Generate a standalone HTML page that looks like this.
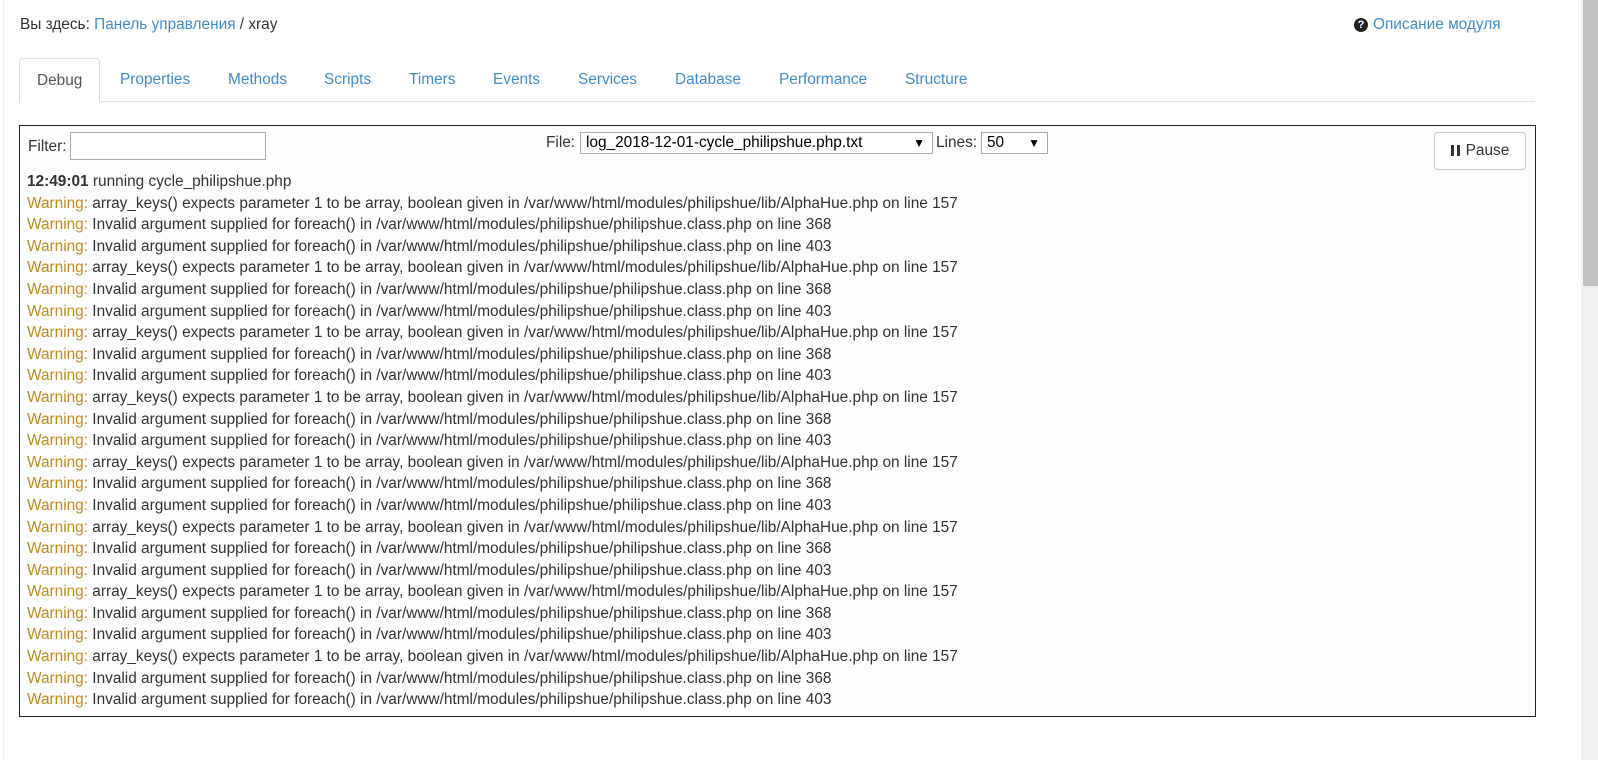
<!DOCTYPE html>
<html><head><meta charset="utf-8"><style>
*{box-sizing:border-box}
body{margin:0;width:1598px;height:760px;overflow:hidden;background:#fff;font-family:"Liberation Sans",Arial,sans-serif;color:#333;position:relative}
a{color:#428bca;text-decoration:none}
.lline{position:absolute;left:3px;top:0;width:1px;height:760px;background:#eee}
.sb{position:absolute;left:1581px;top:0;width:17px;height:760px;background:#f0f0f0}
.th{position:absolute;left:1583px;top:0;width:15px;height:286px;background:#c1c1c1}
.bc{position:absolute;left:20px;top:16px;font-size:15.4px}
.help{position:absolute;left:1354px;top:16px;font-size:15.4px}
.help i{display:inline-block;width:14px;height:14px;border-radius:50%;background:#222;color:#fff;font-size:11px;font-style:normal;font-weight:bold;text-align:center;line-height:14px;vertical-align:1px;margin-right:5px}
.tabs{position:absolute;left:19px;top:58px;width:1516px;height:44px;border-bottom:1px solid #ddd}
.tab{position:absolute;top:0;height:44px;line-height:43px;font-size:15.4px;color:#428bca}
.tab.act{color:#555;border:1px solid #ddd;border-bottom:1px solid #fff;border-radius:4px 4px 0 0;background:#fff;height:45px;padding:0 17px;left:0}
.box{position:absolute;left:19px;top:125px;width:1517px;height:592px;border:1px solid #222;background:#fdfdfd}
.f{position:absolute;font-size:15.4px}
.inp{position:absolute;left:50px;top:6px;width:196px;height:28px;border:1px solid #aaa;background:#fff}
.sel{position:absolute;height:22px;border:1px solid #aaa;background:#fff;font-size:15.4px;line-height:20px;padding-left:5px;color:#000}
.sel b{position:absolute;right:7px;top:0;font-size:12px;font-weight:normal}
.btn{position:absolute;left:1414px;top:6px;width:92px;height:38px;border:1px solid #ccc;border-radius:4px;background:#fff;font-size:15.4px;line-height:36px;text-align:center;color:#333}
.btn i{display:inline-block;height:11px;border-left:3px solid #333;border-right:3px solid #333;width:9px;margin-right:6px;vertical-align:-1px}
.log{position:absolute;left:7px;top:45px;font-size:15.4px;line-height:21.6px;white-space:nowrap}
.w{color:#c08a1e}
</style></head><body>
<div class="lline"></div>
<div class="sb"></div><div class="th"></div>
<div class="bc">Вы здесь: <a>Панель управления</a> / xray</div>
<div class="help"><i>?</i><a>Описание модуля</a></div>
<div class="tabs">
<div class="tab act">Debug</div>
<div class="tab" style="left:101px">Properties</div>
<div class="tab" style="left:209px">Methods</div>
<div class="tab" style="left:305px">Scripts</div>
<div class="tab" style="left:390px">Timers</div>
<div class="tab" style="left:474px">Events</div>
<div class="tab" style="left:559px">Services</div>
<div class="tab" style="left:656px">Database</div>
<div class="tab" style="left:760px">Performance</div>
<div class="tab" style="left:886px">Structure</div>
</div>
<div class="box">
<div class="f" style="left:8px;top:12px">Filter:</div>
<div class="inp"></div>
<div class="f" style="left:526px;top:8px">File:</div>
<div class="sel" style="left:560px;top:6px;width:353px">log_2018-12-01-cycle_philipshue.php.txt<b>▼</b></div>
<div class="f" style="left:916px;top:8px">Lines:</div>
<div class="sel" style="left:961px;top:6px;width:67px">50<b>▼</b></div>
<div class="btn"><i></i>Pause</div>
<div class="log">
<b>12:49:01</b> running cycle_philipshue.php<br>
<span class="w">Warning:</span> array_keys() expects parameter 1 to be array, boolean given in /var/www/html/modules/philipshue/lib/AlphaHue.php on line 157<br>
<span class="w">Warning:</span> Invalid argument supplied for foreach() in /var/www/html/modules/philipshue/philipshue.class.php on line 368<br>
<span class="w">Warning:</span> Invalid argument supplied for foreach() in /var/www/html/modules/philipshue/philipshue.class.php on line 403<br>
<span class="w">Warning:</span> array_keys() expects parameter 1 to be array, boolean given in /var/www/html/modules/philipshue/lib/AlphaHue.php on line 157<br>
<span class="w">Warning:</span> Invalid argument supplied for foreach() in /var/www/html/modules/philipshue/philipshue.class.php on line 368<br>
<span class="w">Warning:</span> Invalid argument supplied for foreach() in /var/www/html/modules/philipshue/philipshue.class.php on line 403<br>
<span class="w">Warning:</span> array_keys() expects parameter 1 to be array, boolean given in /var/www/html/modules/philipshue/lib/AlphaHue.php on line 157<br>
<span class="w">Warning:</span> Invalid argument supplied for foreach() in /var/www/html/modules/philipshue/philipshue.class.php on line 368<br>
<span class="w">Warning:</span> Invalid argument supplied for foreach() in /var/www/html/modules/philipshue/philipshue.class.php on line 403<br>
<span class="w">Warning:</span> array_keys() expects parameter 1 to be array, boolean given in /var/www/html/modules/philipshue/lib/AlphaHue.php on line 157<br>
<span class="w">Warning:</span> Invalid argument supplied for foreach() in /var/www/html/modules/philipshue/philipshue.class.php on line 368<br>
<span class="w">Warning:</span> Invalid argument supplied for foreach() in /var/www/html/modules/philipshue/philipshue.class.php on line 403<br>
<span class="w">Warning:</span> array_keys() expects parameter 1 to be array, boolean given in /var/www/html/modules/philipshue/lib/AlphaHue.php on line 157<br>
<span class="w">Warning:</span> Invalid argument supplied for foreach() in /var/www/html/modules/philipshue/philipshue.class.php on line 368<br>
<span class="w">Warning:</span> Invalid argument supplied for foreach() in /var/www/html/modules/philipshue/philipshue.class.php on line 403<br>
<span class="w">Warning:</span> array_keys() expects parameter 1 to be array, boolean given in /var/www/html/modules/philipshue/lib/AlphaHue.php on line 157<br>
<span class="w">Warning:</span> Invalid argument supplied for foreach() in /var/www/html/modules/philipshue/philipshue.class.php on line 368<br>
<span class="w">Warning:</span> Invalid argument supplied for foreach() in /var/www/html/modules/philipshue/philipshue.class.php on line 403<br>
<span class="w">Warning:</span> array_keys() expects parameter 1 to be array, boolean given in /var/www/html/modules/philipshue/lib/AlphaHue.php on line 157<br>
<span class="w">Warning:</span> Invalid argument supplied for foreach() in /var/www/html/modules/philipshue/philipshue.class.php on line 368<br>
<span class="w">Warning:</span> Invalid argument supplied for foreach() in /var/www/html/modules/philipshue/philipshue.class.php on line 403<br>
<span class="w">Warning:</span> array_keys() expects parameter 1 to be array, boolean given in /var/www/html/modules/philipshue/lib/AlphaHue.php on line 157<br>
<span class="w">Warning:</span> Invalid argument supplied for foreach() in /var/www/html/modules/philipshue/philipshue.class.php on line 368<br>
<span class="w">Warning:</span> Invalid argument supplied for foreach() in /var/www/html/modules/philipshue/philipshue.class.php on line 403
</div>
</div>
</body></html>
